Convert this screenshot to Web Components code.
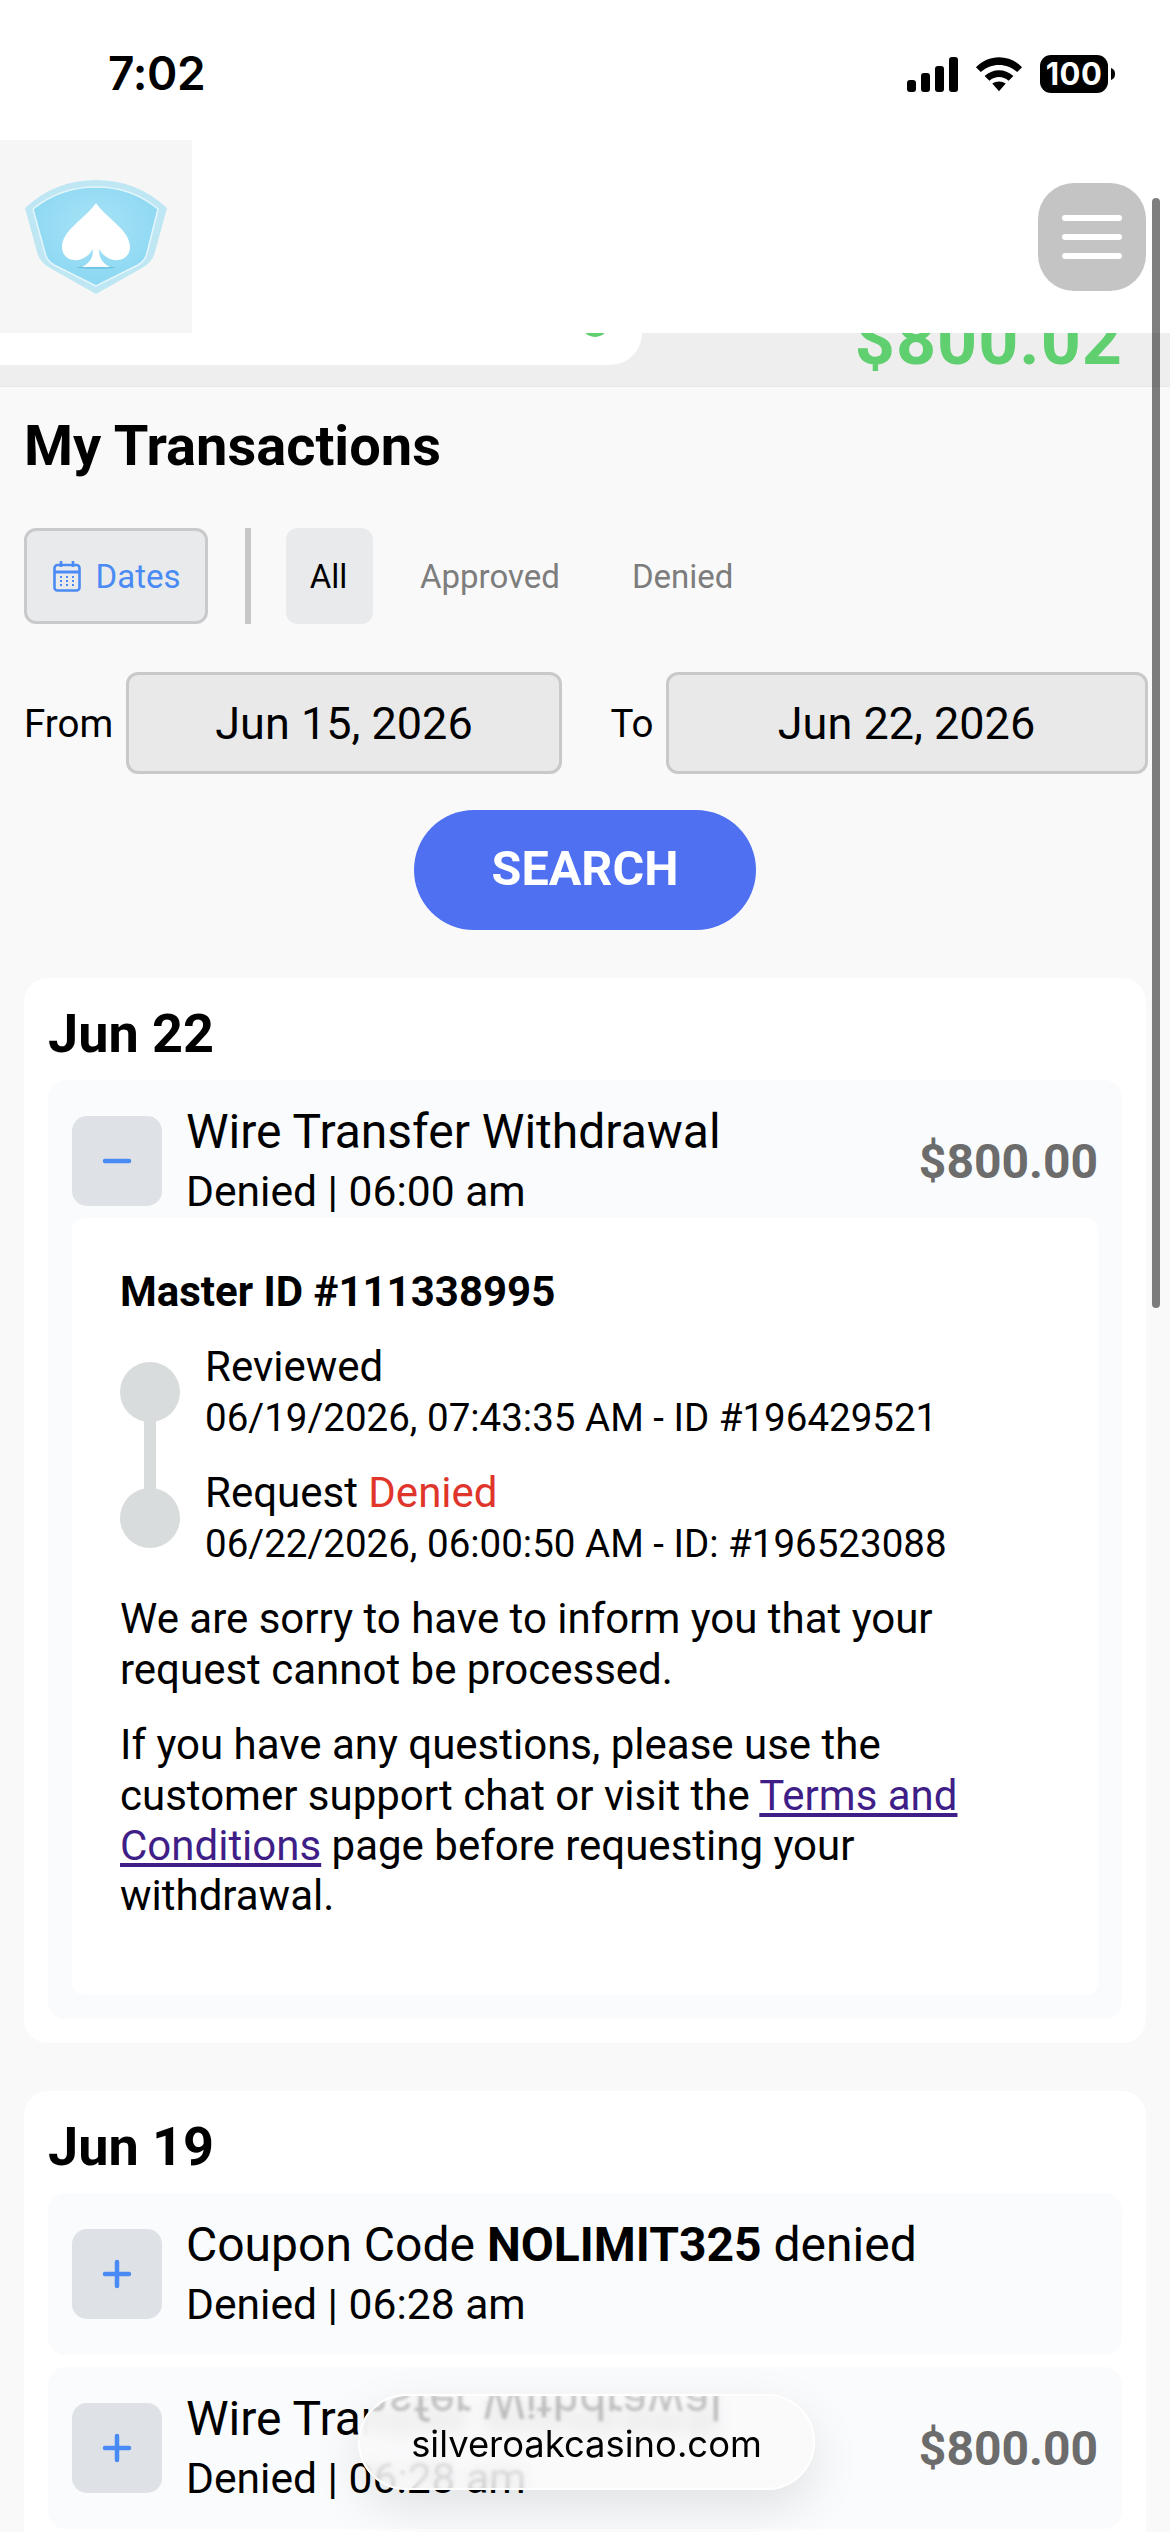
<!DOCTYPE html>
<html lang="en">
<head>
<meta charset="utf-8">
<title>My Transactions</title>
<style>
  html, body { margin: 0; padding: 0; }
  body { width: 1170px; height: 2532px; overflow: hidden; position: relative; background: #f9f9fa; font-family: Roboto, "Liberation Sans", sans-serif; color: #000; }
  main { display: block; padding: 0 24px; }
</style>
</head>
<body>
<status-bar></status-bar>
<site-header></site-header>
<balance-band></balance-band>
<main>
  <page-title>My Transactions</page-title>
  <filter-tabs></filter-tabs>
  <date-range></date-range>
  <search-button>SEARCH</search-button>
  <day-group label="Jun 22">
    <txn-row open amount="$800.00" sub="Denied | 06:00 am">
      Wire Transfer Withdrawal
      <txn-detail slot="detail"></txn-detail>
    </txn-row>
  </day-group>
  <day-group label="Jun 19">
    <txn-row sub="Denied | 06:28 am">Coupon Code <b>NOLIMIT325</b> denied</txn-row>
    <txn-row amount="$800.00" sub="Denied | 06:28 am">Wire Transfer Withdrawal</txn-row>
  </day-group>
</main>
<scroll-thumb></scroll-thumb>
<url-pill>silveroakcasino.com</url-pill>

<script>
// small helper, every element just sets its markup in an open shadow root
function shadow(el, html) {
  el.attachShadow({ mode: 'open' }).innerHTML = html;
}

class StatusBar extends HTMLElement {
  connectedCallback() {
    shadow(this, `
      <style>
        :host { display: flex; height: 140px; background: #fff; align-items: center; justify-content: space-between; padding: 0 55px 0 108px; box-sizing: border-box; }
        .time { font: 600 46px/1 Inter, "Liberation Sans", sans-serif; letter-spacing: -0.3px; margin-top: 6px; }
        .icons { display: flex; align-items: center; gap: 17px; margin-top: 8px; }
        svg { display: block; }
      </style>
      <span class="time">7:02</span>
      <span class="icons">
        <svg width="51" height="35" viewBox="0 0 51 35">
          <rect x="0" y="23" width="9" height="12" rx="3"/>
          <rect x="14" y="16" width="9" height="19" rx="3"/>
          <rect x="28" y="9" width="9" height="26" rx="3"/>
          <rect x="42" y="0" width="9" height="35" rx="3"/>
        </svg>
        <svg width="48" height="38" viewBox="0 0 50 38">
          <path d="M1 12 C14 -2 36 -2 49 12 L44 17 C33 7 17 7 6 17 Z"/>
          <path d="M10 21 C19 13 31 13 40 21 L35 26 C29 21 21 21 15 26 Z"/>
          <path d="M18 29 C22 26 28 26 32 29 L25 37 Z"/>
        </svg>
        <svg width="75" height="38" viewBox="0 0 75 38">
          <rect x="0" y="0" width="68" height="38" rx="11"/>
          <path d="M71 13 C74 14 75 16 75 19 C75 22 74 24 71 25 Z"/>
          <text x="34" y="30" text-anchor="middle" font-family="Inter, Liberation Sans, sans-serif" font-weight="700" font-size="31" fill="#fff" letter-spacing="0.5">100</text>
        </svg>
      </span>`);
  }
}

class SiteHeader extends HTMLElement {
  connectedCallback() {
    shadow(this, `
      <style>
        :host { display: flex; height: 193px; background: #fff; align-items: center; justify-content: space-between; padding-right: 24px; box-sizing: border-box; }
        .logo { width: 192px; height: 193px; background: #f6f6f6; display: block; }
        .menu { width: 108px; height: 108px; border-radius: 36px; background: #c4c4c4; display: flex; flex-direction: column; align-items: center; justify-content: center; gap: 13px; }
        .menu i { display: block; width: 60px; height: 6px; border-radius: 3px; background: #fff; }
      </style>
      <svg class="logo" viewBox="0 0 192 193">
        <defs>
          <radialGradient id="sh" cx="50%" cy="40%" r="60%">
            <stop offset="0" stop-color="#a8e3f6"/>
            <stop offset="1" stop-color="#8bd7f2"/>
          </radialGradient>
        </defs>
        <path d="M25 68 Q55 40 96 40 Q137 40 167 68 L155 112 Q152 123 142 128 L96 154 L50 128 Q40 123 37 112 Z" fill="#bfe7f3"/>
        <path d="M33 69 Q60 47 96 47 Q132 47 158 69 L147 113 Q145 121 138 125 L96 146 L54 125 Q47 121 45 113 Z" fill="url(#sh)" stroke="#e4f6fb" stroke-width="1.5"/>
        <ellipse cx="96" cy="127.5" rx="19" ry="1.5" fill="#6fc3e3"/>
        <path d="M96 63 C85 79 62 90 62 107 C62 118 72 121 78 120 C85 119 90 114 93 109 C93 118 90 123 82 127 L110 127 C102 123 99 118 99 109 C102 114 107 119 114 120 C120 121 130 118 130 107 C130 90 107 79 96 63 Z" fill="#fff"/>
      </svg>
      <div class="menu"><i></i><i></i><i></i></div>`);
  }
}

class BalanceBand extends HTMLElement {
  connectedCallback() {
    shadow(this, `
      <style>
        :host { display: block; position: relative; height: 53px; background: #eee; overflow: hidden; border-bottom: 1px solid #e9e9e9; }
        .plate { height: 32px; width: 642px; background: #fff; border-bottom-right-radius: 50px; position: relative; overflow: hidden; }
        .dot { position: absolute; left: 579px; top: -35px; width: 32px; height: 39px; border-radius: 50%; background: #5fcf6f; }
        .amount { position: absolute; right: 47px; bottom: 11px; font: 700 70px/1 Roboto, sans-serif; color: #5fcf6f; letter-spacing: 1px; }
      </style>
      <div class="plate"><span class="dot"></span></div>
      <span class="amount">$800.02</span>`);
  }
}

class PageTitle extends HTMLElement {
  connectedCallback() {
    shadow(this, `
      <style>:host { display: block; margin-top: 29px; font: 700 56px/60px Roboto, sans-serif; }</style>
      <slot></slot>`);
  }
}

class FilterTabs extends HTMLElement {
  connectedCallback() {
    shadow(this, `
      <style>
        :host { display: flex; margin-top: 52px; height: 96px; align-items: stretch; font: 400 33px Roboto, sans-serif; color: #7d7d7d; }
        .dates { width: 184px; box-sizing: border-box; border: 3px solid #c9cacb; border-radius: 12px; background: #e9eaeb; color: #4a8af4; display: flex; align-items: center; justify-content: center; gap: 15px; padding-left: 1px; }
        .sep { width: 6px; background: #c6c7c8; margin: 0 35px 0 37px; }
        .tab { display: flex; align-items: center; padding: 0 26px; }
        .all { background: #e9eaeb; color: #000; border-radius: 12px; width: 87px; box-sizing: border-box; padding: 0 2px 0 0; justify-content: center; margin-right: 21px; }
        .approved { padding: 0 26px; margin-right: 20px; }
        svg { display: block; }
      </style>
      <div class="dates">
        <svg width="28" height="32" viewBox="0 0 28 32" fill="none" stroke="#4a8af4" stroke-width="2.6">
          <rect x="1.5" y="5" width="25" height="25.5" rx="3"/>
          <path d="M1.5 12 H26.5" stroke-width="3"/>
          <path d="M8 1 V7 M20 1 V7"/>
          <path d="M7 17 H9 M13 17 H15 M19 17 H21 M7 21 H9 M13 21 H15 M19 21 H21 M7 25 H9 M13 25 H15 M19 25 H21" stroke-width="2.2"/>
        </svg>
        <span>Dates</span>
      </div>
      <div class="sep"></div>
      <div class="tab all">All</div>
      <div class="tab approved">Approved</div>
      <div class="tab">Denied</div>`);
  }
}

class DateRange extends HTMLElement {
  connectedCallback() {
    shadow(this, `
      <style>
        :host { display: flex; margin-top: 48px; height: 102px; align-items: stretch; font: 400 38.5px Roboto, sans-serif; width: 1130px; }
        label { display: flex; align-items: center; }
        .from { width: 102px; }
        .to { width: 55px; margin-left: 48.5px; }
        .box { box-sizing: border-box; border: 3px solid #c9c9c9; border-radius: 12px; background: #e9e9e9; display: flex; align-items: center; justify-content: center; font-size: 45px; }
        .a { width: 436px; }
        .b { width: 482px; }
      </style>
      <label class="from">From</label><div class="box a">Jun 15, 2026</div>
      <label class="to">To</label><div class="box b">Jun 22, 2026</div>`);
  }
}

class SearchButton extends HTMLElement {
  connectedCallback() {
    shadow(this, `
      <style>
        :host { display: flex; margin-top: 36px; justify-content: center; }
        div { width: 342px; height: 120px; border-radius: 60px; background: #4e70f1; color: #fff; font: 700 48.5px/118px Roboto, sans-serif; text-align: center; }
      </style>
      <div><slot></slot></div>`);
  }
}

class DayGroup extends HTMLElement {
  connectedCallback() {
    shadow(this, `
      <style>
        :host { display: block; margin-top: 48px; background: #fff; border-radius: 24px; padding: 0 24px 24px; }
        h2 { margin: 0; height: 102px; font: 700 54px/112px Roboto, sans-serif; }
        .rows { display: flex; flex-direction: column; gap: 12px; }
      </style>
      <h2>${this.getAttribute('label')}</h2>
      <div class="rows"><slot></slot></div>`);
  }
}

class TxnRow extends HTMLElement {
  connectedCallback() {
    const open = this.hasAttribute('open');
    const amount = this.getAttribute('amount') || '';
    shadow(this, `
      <style>
        :host { display: block; background: #f9fbfc; border-radius: 18px; padding: 24px; }
        .head { display: flex; align-items: center; height: 114px; }
        .toggle { flex: none; width: 90px; height: 90px; border-radius: 15px; background: #dee2e6; display: flex; align-items: center; justify-content: center; margin-right: 24px; }
        .text { flex: 1; align-self: flex-start; }
        .title { font: 400 48px/58px Roboto, sans-serif; margin-top: -1px; }
        .sub { font: 400 42.6px/56px Roboto, sans-serif; margin-top: 2px; }
        .amount { font: 700 48px Roboto, sans-serif; color: #6c6c6c; }
        svg { display: block; }
      </style>
      <div class="head">
        <div class="toggle">
          <svg width="30" height="30" viewBox="0 0 30 30" fill="none" stroke="#4a8af4" stroke-width="4.5" stroke-linecap="round">
            <path d="M3 15 H27"/>${open ? '' : '<path d="M15 3 V27"/>'}
          </svg>
        </div>
        <div class="text">
          <div class="title"><slot></slot></div>
          <div class="sub">${this.getAttribute('sub')}</div>
        </div>
        <div class="amount">${amount}</div>
      </div>
      <slot name="detail"></slot>`);
  }
}

class TxnDetail extends HTMLElement {
  connectedCallback() {
    shadow(this, `
      <style>
        :host { display: block; background: #fff; border-radius: 12px; padding: 49.5px 48px 0; height: 777px; box-sizing: border-box; font: 400 38.5px/52px Roboto, sans-serif; }
        h3 { margin: 0 0 26px; font: 700 42px/48px Roboto, sans-serif; }
        .steps { display: grid; grid-template-columns: 60px 1fr; column-gap: 25px; }
        .rail { position: relative; display: flex; flex-direction: column; justify-content: space-between; height: 186px; margin-top: 20.5px; }
        .rail i { display: block; width: 60px; height: 60px; border-radius: 50%; background: #d9dcdd; }
        .rail b { position: absolute; left: 24px; top: 50px; width: 12px; height: 86px; background: #d9dcdd; }
        .step { margin-bottom: 24px; }
        .step div { white-space: nowrap; }
        .big { font-size: 42px; line-height: 50.4px; }
        .red { color: #e0352b; }
        p { margin: 0 0 25px; font-size: 42px; line-height: 50.4px; }
        a { color: #3f1f87; text-decoration: underline; }
      </style>
      <h3>Master ID #111338995</h3>
      <div class="steps">
        <div class="rail"><i></i><b></b><i></i></div>
        <div>
          <div class="step"><div class="big">Reviewed</div><div>06/19/2026, 07:43:35 AM - ID #196429521</div></div>
          <div class="step"><div class="big">Request <span class="red">Denied</span></div><div>06/22/2026, 06:00:50 AM - ID: #196523088</div></div>
        </div>
      </div>
      <p>We are sorry to have to inform you that your<br>request cannot be processed.</p>
      <p>If you have any questions, please use the<br>customer support chat or visit the <a>Terms and<br>Conditions</a> page before requesting your<br>withdrawal.</p>`);
  }
}

// overlay things
class ScrollThumb extends HTMLElement {
  connectedCallback() {
    shadow(this, `<style>:host { position: absolute; left: 1152px; top: 198px; width: 8px; height: 1110px; border-radius: 4px; background: rgba(0,0,0,.5); }</style>`);
  }
}

class UrlPill extends HTMLElement {
  connectedCallback() {
    shadow(this, `
      <style>
        :host { position: absolute; left: 358px; top: 2394px; width: 457px; height: 96px; box-sizing: border-box; border-radius: 48px; border: 2px solid #fff; background: rgba(249,250,251,.9); -webkit-backdrop-filter: blur(8px); backdrop-filter: blur(8px); box-shadow: 0 18px 50px rgba(0,0,0,.1); display: flex; align-items: center; justify-content: center; font: 400 36.4px Inter, "Liberation Sans", sans-serif; padding-top: 3px; }
        /* the glass picks up a mirrored copy of the row behind it, decoration only */
        .glass { position: absolute; inset: 0; border-radius: 46px; overflow: hidden; }
        .glass::before, .glass::after { position: absolute; left: -173px; white-space: nowrap; font-family: Roboto, sans-serif; filter: blur(1.5px); }
        .glass::before { content: "Wire Transfer Withdrawal"; top: -24px; font-size: 48px; line-height: 58px; transform: scaleY(-1); color: rgba(70,70,70,.3); }
        .glass::after { content: "Denied | 06:28 am"; top: 54px; font-size: 42.6px; line-height: 56px; color: rgba(70,70,70,.14); }
        .url { position: relative; }
      </style>
      <div class="glass"></div>
      <span class="url"><slot></slot></span>`);
  }
}

customElements.define('status-bar', StatusBar);
customElements.define('site-header', SiteHeader);
customElements.define('balance-band', BalanceBand);
customElements.define('page-title', PageTitle);
customElements.define('filter-tabs', FilterTabs);
customElements.define('date-range', DateRange);
customElements.define('search-button', SearchButton);
customElements.define('day-group', DayGroup);
customElements.define('txn-row', TxnRow);
customElements.define('txn-detail', TxnDetail);
customElements.define('scroll-thumb', ScrollThumb);
customElements.define('url-pill', UrlPill);
</script>
</body>
</html>
